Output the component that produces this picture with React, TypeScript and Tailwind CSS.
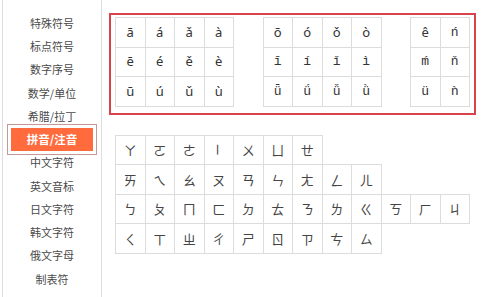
import React from 'react';

const menu = [
  '特殊符号',
  '标点符号',
  '数字序号',
  '数学/单位',
  '希腊/拉丁',
  '拼音/注音',
  '中文字符',
  '英文音标',
  '日文字符',
  '韩文字符',
  '俄文字母',
  '制表符',
];

// m = rendered in a monospace fallback, like the screenshot
type Cell = { c: string; m?: boolean } | null;

const s = (c: string): Cell => ({ c });
const m = (c: string): Cell => ({ c, m: true });

const pinyin: Cell[][] = [
  [s('ā'), s('á'), s('ǎ'), s('à'), null, s('ō'), s('ó'), s('ǒ'), s('ò'), null, s('ê'), m('ń')],
  [s('ē'), s('é'), s('ě'), s('è'), null, m('ī'), m('í'), m('ǐ'), m('ì'), null, m('ḿ'), m('ň')],
  [s('ū'), s('ú'), s('ǔ'), s('ù'), null, m('ǖ'), m('ǘ'), m('ǚ'), m('ǜ'), null, m('ü'), m('ǹ')],
];

const zhuyin: string[][] = [
  ['ㄚ', 'ㄛ', 'ㄜ', 'ㄧ', 'ㄨ', 'ㄩ', 'ㄝ'],
  ['ㄞ', 'ㄟ', 'ㄠ', 'ㄡ', 'ㄢ', 'ㄣ', 'ㄤ', 'ㄥ', 'ㄦ'],
  ['ㄅ', 'ㄆ', 'ㄇ', 'ㄈ', 'ㄉ', 'ㄊ', 'ㄋ', 'ㄌ', 'ㄍ', 'ㄎ', 'ㄏ', 'ㄐ'],
  ['ㄑ', 'ㄒ', 'ㄓ', 'ㄔ', 'ㄕ', 'ㄖ', 'ㄗ', 'ㄘ', 'ㄙ'],
];

function Box({ children, mono }: { children: React.ReactNode; mono?: boolean }) {
  return (
    <div
      className={`w-[30.5px] h-[30.5px] border border-[#dcdcdc] flex items-center justify-center text-[#333] ${
        mono ? "font-['Liberation_Mono',monospace] text-[13px]" : "font-['Noto_Sans',sans-serif] text-[13px]"
      }`}
    >
      {children}
    </div>
  );
}

export default function App() {
  return (
    <div className="flex h-[297px] w-[500px] bg-white overflow-hidden">
      {/* Sidebar */}
      <div className="ml-[2px] w-[100px] h-full border-l border-r border-[#dedede] pt-[11.4px] shrink-0">
        {menu.map((item) => {
          const active = item === '拼音/注音';
          return (
            <div key={item} className="h-[23.27px] flex items-center justify-center">
              {active ? (
                <div className="relative z-10 w-[90px] h-[31px] border border-[#c49a94] p-[3px] bg-white">
                  <div className="w-full h-full bg-[#ff6b3d] flex items-center justify-center text-white text-[11.5px] font-bold font-['Noto_Sans_CJK_SC',sans-serif]">
                    {item}
                  </div>
                </div>
              ) : (
                <span className="text-[11px] text-[#4a4a4a] font-['Noto_Sans_CJK_SC',sans-serif]">{item}</span>
              )}
            </div>
          );
        })}
      </div>

      {/* Content */}
      <div className="ml-[7px] pt-[13px]">
        <div className="w-[367px] border-2 border-[#d9434a] pt-[2px] pl-[4px] pb-[7px]">
          <div className="grid grid-cols-[repeat(12,29.5px)] grid-rows-[repeat(3,29.5px)]">
            {pinyin.flat().map((cell, i) =>
              cell ? (
                <Box key={i} mono={cell.m}>
                  {cell.c}
                </Box>
              ) : (
                <div key={i} />
              )
            )}
          </div>
        </div>

        <div className="mt-[20px] ml-[6px] flex flex-col">
          {zhuyin.map((row, r) => (
            <div key={r} className="flex h-[29.5px]">
              {row.map((ch) => (
                <div key={ch} className="w-[29.5px] shrink-0">
                  <div className="w-[30.5px] h-[30.5px] border border-[#dcdcdc] flex items-center justify-center text-[13px] text-[#444] font-['Noto_Sans_CJK_TC',sans-serif]">
                    {ch === 'ㄧ' ? <span className="inline-block rotate-90">{ch}</span> : ch}
                  </div>
                </div>
              ))}
            </div>
          ))}
        </div>
      </div>
    </div>
  );
}
